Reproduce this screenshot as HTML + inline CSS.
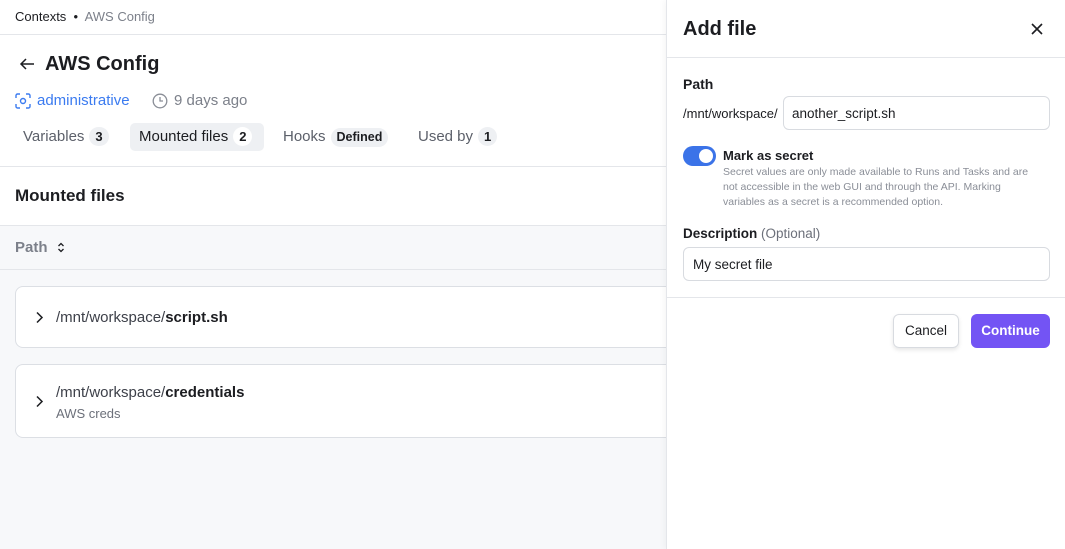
<!DOCTYPE html><html><head><style>
*{box-sizing:border-box;margin:0;padding:0}
body{width:1065px;height:549px;overflow:hidden;font-family:"Liberation Sans",sans-serif;background:#f7f8fa;position:relative;color:#1c1d21}
.abs{position:absolute}
.badge{display:inline-block;background:#eef0f3;border-radius:10px;padding:0 6px;font-size:13px;line-height:19px;font-weight:bold;color:#1c1d21;margin-left:5px}
.card{position:absolute;left:15px;width:700px;background:#fff;border:1px solid #dcdfe4;border-radius:8px}
</style></head><body>
<div class="abs" style="left:0;top:0;width:666px;height:226px;background:#fff"></div>
<div class="abs" style="left:15px;top:9px;font-size:13px;color:#1c1d21">Contexts &nbsp;•&nbsp; <span style="color:#7c808a">AWS Config</span></div>
<div class="abs" style="left:0;top:34px;width:666px;height:1px;background:#e4e6ea"></div>
<svg class="abs" style="left:18px;top:56px" width="18" height="16" viewBox="0 0 18 16"><path d="M16 8H3M8 3L3 8l5 5" fill="none" stroke="#1c1d21" stroke-width="1.5"/></svg>
<div class="abs" style="left:45px;top:53px;font-size:20px;font-weight:bold">AWS Config</div>
<svg class="abs" style="left:15px;top:93px" width="16" height="16" viewBox="0 0 16 16"><path d="M1 5V2.5A1.5 1.5 0 0 1 2.5 1H5M11 1h2.5A1.5 1.5 0 0 1 15 2.5V5M15 11v2.5a1.5 1.5 0 0 1-1.5 1.5H11M5 15H2.5A1.5 1.5 0 0 1 1 13.5V11" fill="none" stroke="#3b7bf0" stroke-width="1.4"/><circle cx="8" cy="8" r="2.5" fill="none" stroke="#3b7bf0" stroke-width="1.4"/></svg>
<div class="abs" style="left:37px;top:92px;font-size:15px;color:#3b7bf0">administrative</div>
<svg class="abs" style="left:152px;top:93px" width="16" height="16" viewBox="0 0 16 16"><circle cx="8" cy="8" r="6.8" fill="none" stroke="#8a8e97" stroke-width="1.3"/><path d="M8 4v4h3" fill="none" stroke="#8a8e97" stroke-width="1.3"/></svg>
<div class="abs" style="left:174px;top:92px;font-size:15px;color:#7c808a">9 days ago</div>
<div class="abs" style="left:23px;top:127px;font-size:15px;color:#5c606a;line-height:20px">Variables<span class="badge">3</span></div>
<div class="abs" style="left:130px;top:123px;width:134px;height:28px;background:#eef0f3;border-radius:5px"></div>
<div class="abs" style="left:139px;top:127px;font-size:15px;color:#1c1d21;line-height:20px">Mounted files<span class="badge" style="background:#fff">2</span></div>
<div class="abs" style="left:283px;top:127px;font-size:15px;color:#5c606a;line-height:20px">Hooks<span class="badge" style="font-size:12.5px">Defined</span></div>
<div class="abs" style="left:418px;top:127px;font-size:15px;color:#5c606a;line-height:20px">Used by<span class="badge">1</span></div>
<div class="abs" style="left:0;top:166px;width:666px;height:1px;background:#e4e6ea"></div>
<div class="abs" style="left:15px;top:186px;font-size:17px;font-weight:bold">Mounted files</div>
<div class="abs" style="left:0;top:225px;width:666px;height:1px;background:#e4e6ea"></div>
<div class="abs" style="left:15px;top:239px;font-size:15px;font-weight:bold;color:#7c808a">Path</div>
<svg class="abs" style="left:57px;top:242px" width="8" height="11" viewBox="0 0 8 11"><path d="M1.5 4L4 1.5 6.5 4M1.5 7L4 9.5 6.5 7" fill="none" stroke="#1c1d21" stroke-width="1.3"/></svg>
<div class="abs" style="left:0;top:269px;width:666px;height:1px;background:#e4e6ea"></div>
<div class="card" style="top:286px;height:62px">
<svg class="abs" style="left:19px;top:24px" width="9" height="13" viewBox="0 0 9 13"><path d="M2 1.5l5 5-5 5" fill="none" stroke="#1c1d21" stroke-width="1.5"/></svg>
<div class="abs" style="left:40px;top:22px;font-size:15px;color:#3d4049">/mnt/workspace/<b style="color:#1c1d21">script.sh</b></div></div>
<div class="card" style="top:364px;height:74px">
<svg class="abs" style="left:19px;top:30px" width="9" height="13" viewBox="0 0 9 13"><path d="M2 1.5l5 5-5 5" fill="none" stroke="#1c1d21" stroke-width="1.5"/></svg>
<div class="abs" style="left:40px;top:19px;font-size:15px;color:#3d4049">/mnt/workspace/<b style="color:#1c1d21">credentials</b></div>
<div class="abs" style="left:40px;top:41px;font-size:13px;color:#6c707a">AWS creds</div></div>

<div class="abs" style="left:666px;top:0;width:399px;height:549px;background:#fff;border-left:1px solid #e4e6ea;box-shadow:-2px 0 6px rgba(0,0,0,.04)">
<div class="abs" style="left:16px;top:18px;font-size:20px;font-weight:bold">Add file</div>
<svg class="abs" style="left:363px;top:22px" width="14" height="14" viewBox="0 0 14 14"><path d="M2 2l10 10M12 2L2 12" stroke="#1c1d21" stroke-width="1.6"/></svg>
<div class="abs" style="left:0;top:57px;width:399px;height:1px;background:#e4e6ea"></div>
<div class="abs" style="left:16px;top:76px;font-size:14px;font-weight:bold">Path</div>
<div class="abs" style="left:16px;top:106px;font-size:13px;color:#1c1d21">/mnt/workspace/</div>
<div class="abs" style="left:116px;top:96px;width:267px;height:34px;border:1px solid #d8dbe0;border-radius:6px;padding:9px 8px;font-size:13.5px">another_script.sh</div>
<div class="abs" style="left:16px;top:146px;width:33px;height:20px;background:#3b73e8;border-radius:10px"><div style="position:absolute;right:3px;top:3px;width:14px;height:14px;border-radius:50%;background:#fff"></div></div>
<div class="abs" style="left:56px;top:148px;font-size:13px;font-weight:bold">Mark as secret</div>
<div class="abs" style="left:56px;top:165px;width:322px;font-size:10.5px;line-height:15px;color:#8a8e97">Secret values are only made available to Runs and Tasks and are not accessible in the web GUI and through the API. Marking variables as a secret is a recommended option.</div>
<div class="abs" style="left:16px;top:226px;font-size:13.5px"><b>Description</b> <span style="color:#6c707a">(Optional)</span></div>
<div class="abs" style="left:16px;top:247px;width:367px;height:34px;border:1px solid #d8dbe0;border-radius:6px;padding:9px 9px;font-size:13.5px">My secret file</div>
<div class="abs" style="left:0;top:297px;width:399px;height:1px;background:#e4e6ea"></div>
<div class="abs" style="left:226px;top:314px;width:66px;height:34px;border:1px solid #d8dbe0;border-radius:6px;box-shadow:0 2px 4px rgba(0,0,0,.1);font-size:13.5px;text-align:center;line-height:32px">Cancel</div>
<div class="abs" style="left:304px;top:314px;width:79px;height:34px;background:#7354f4;border-radius:6px;color:#fff;font-size:13.5px;font-weight:bold;text-align:center;line-height:34px">Continue</div>
</div>
</body></html>
